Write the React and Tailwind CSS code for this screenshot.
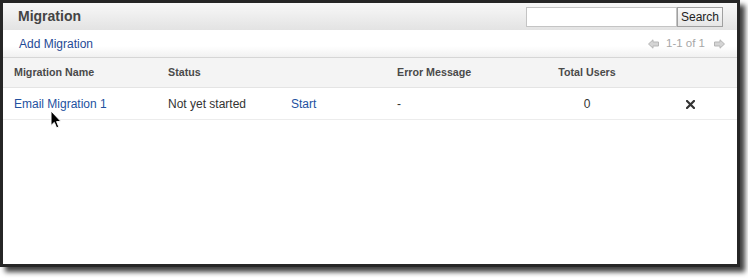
import React from 'react';

const ArrowLeft = () => (
  <svg width="11" height="10" viewBox="0 0 11 10" className="block">
    <path d="M0.5 5 L5 0.8 L5 3 L10.5 3 L10.5 7 L5 7 L5 9.2 Z" fill="#d4d4d4" stroke="#b5b5b5" strokeWidth="1" />
  </svg>
);

const ArrowRight = () => (
  <svg width="11" height="10" viewBox="0 0 11 10" className="block">
    <path d="M10.5 5 L6 0.8 L6 3 L0.5 3 L0.5 7 L6 7 L6 9.2 Z" fill="#d4d4d4" stroke="#b5b5b5" strokeWidth="1" />
  </svg>
);

const Cursor = () => (
  <svg width="12" height="19" viewBox="0 0 12 19">
    <path d="M1 1 L1 15.5 L4.3 12.4 L6.6 17.8 L8.8 16.9 L6.6 11.6 L11 11.6 Z" fill="#000" stroke="#fff" strokeWidth="1" strokeLinejoin="round" />
  </svg>
);

const RemoveIcon = () => (
  <svg width="9" height="9" viewBox="0 0 9 9" className="block">
    <path d="M1 1 L8 8 M8 1 L1 8" stroke="#333" strokeWidth="2.2" strokeLinecap="square" />
  </svg>
);

export default function App() {
  return (
    <div className="w-[748px] h-[278px] bg-white font-['Liberation_Sans',Arial,sans-serif]">
      <div className="w-[740px] h-[267px] border-[3px] border-[#262626] bg-white shadow-[5px_5px_5px_rgba(0,0,0,0.75)] flex flex-col relative">
        {/* title bar */}
        <div className="h-[27px] flex items-center justify-between pl-[15px] pr-[14px] bg-gradient-to-b from-[#f8f8f8] to-[#e3e3e3]">
          <h1 className="text-[14px] font-bold text-[#444]">Migration</h1>
          <div className="flex items-center h-[20px]">
            <input className="w-[151px] h-[20px] bg-white border border-[#c4c4c4] outline-none" />
            <button className="h-[20px] w-[46px] text-[12px] text-[#222] border border-[#a0a0a0] bg-gradient-to-b from-[#fafafa] to-[#e6e6e6] flex items-center justify-center">
              Search
            </button>
          </div>
        </div>

        {/* toolbar */}
        <div className="h-[28px] flex items-center justify-between pl-[16px] pr-[12px] bg-gradient-to-b from-white from-60% to-[#f1f1f1] border-b border-[#d6d6d6]">
          <a className="text-[12px] text-[#1f4a96]">Add Migration</a>
          <div className="flex items-center text-[11.5px] text-[#a6a6a6]">
            <ArrowLeft />
            <span className="ml-[7px]">1-1 of 1</span>
            <span className="ml-[9px]"><ArrowRight /></span>
          </div>
        </div>

        {/* table header */}
        <div className="h-[30px] flex items-center bg-[#f4f4f4] border-b border-[#e4e4e4] text-[10.7px] font-bold text-[#4a4a4a]">
          <div className="w-[165px] pl-[11px]">Migration Name</div>
          <div className="w-[229px]">Status</div>
          <div className="w-[140px]">Error Message</div>
          <div className="w-[100px] text-center">Total Users</div>
          <div className="flex-1"></div>
        </div>

        {/* data row */}
        <div className="h-[32px] pt-px flex items-center border-b border-[#ececec] text-[12px] text-[#333]">
          <div className="w-[165px] pl-[11px] text-[#23519f]">Email Migration 1</div>
          <div className="w-[123px]">Not yet started</div>
          <div className="w-[106px] text-[#23519f]">Start</div>
          <div className="w-[140px]">-</div>
          <div className="w-[100px] text-center">0</div>
          <div className="flex-1 pl-[49px]"><RemoveIcon /></div>
        </div>

        <div className="flex-1" />

        {/* mouse pointer */}
        <div className="absolute left-[47px] top-[107px]">
          <Cursor />
        </div>
      </div>
    </div>
  );
}
